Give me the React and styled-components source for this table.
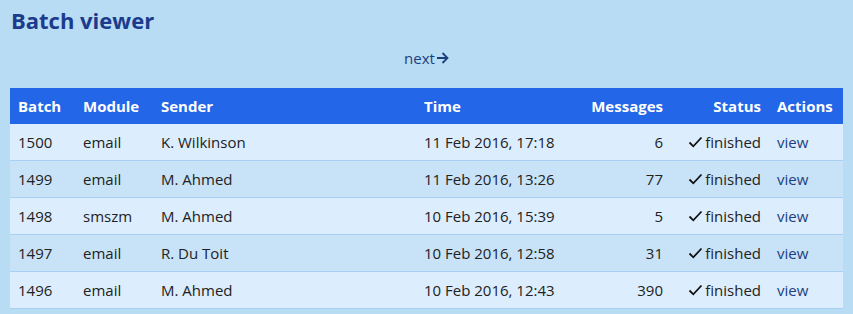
import React from "react";
import styled, { createGlobalStyle } from "styled-components";

const Global = createGlobalStyle`
  body {
    margin: 0;
    background: #b8dcf3;
    font-family: "Open Sans", "Noto Sans", sans-serif;
  }
`;

const Page = styled.div`
  padding: 6px 10px 5px;
`;

const Title = styled.h1`
  margin: 0 0 0 1px;
  font-size: 22px;
  font-weight: 700;
  color: #1c3b8c;
  line-height: 28px;
`;

const Pager = styled.div`
  text-align: center;
  margin: 14px 0 20px;
  font-size: 15px;
  line-height: 20px;
`;

const NextLink = styled.a`
  color: #1e3f7f;
  text-decoration: none;
  display: inline-flex;
  align-items: center;
  gap: 1px;
`;

const Table = styled.table`
  width: 100%;
  border-collapse: collapse;
  table-layout: fixed;
  font-size: 15px;
`;

const Th = styled.th`
  background: #2366e8;
  color: #fff;
  font-weight: 700;
  height: 36px;
  padding: 0 8px;
  text-align: ${p => p.$right ? "right" : "left"};
`;

const Row = styled.tr`
  background: ${p => p.$alt ? "#c8e3f8" : "#dcedfd"};
  border-bottom: 1px solid #a8d0f2;
`;

const Td = styled.td`
  height: 36px;
  padding: 0 8px;
  color: #222;
  text-align: ${p => p.$right ? "right" : "left"};
  white-space: nowrap;
`;

const Check = styled.span`
  margin-right: 2px;
`;

const View = styled.a`
  color: #1e3f7f;
  text-decoration: none;
`;

const rows = [
  [1500, "email", "K. Wilkinson", "11 Feb 2016, 17:18", 6],
  [1499, "email", "M. Ahmed", "11 Feb 2016, 13:26", 77],
  [1498, "smszm", "M. Ahmed", "10 Feb 2016, 15:39", 5],
  [1497, "email", "R. Du Toit", "10 Feb 2016, 12:58", 31],
  [1496, "email", "M. Ahmed", "10 Feb 2016, 12:43", 390],
];

function Arrow() {
  return (
    <svg width="13" height="12" viewBox="0 0 13 12" fill="none" stroke="#1e3f7f" strokeWidth="1.8">
      <path d="M1 6h10.5M6.5 1l5 5-5 5" />
    </svg>
  );
}

function Tick() {
  return (
    <svg width="15" height="12" viewBox="0 0 15 12" fill="none" stroke="#111" strokeWidth="1.8">
      <path d="M1.5 6.5l3.8 3.8L13.5 1.5" />
    </svg>
  );
}

export default function App() {
  return (
    <Page>
      <Global />
      <Title>Batch viewer</Title>
      <Pager>
        <NextLink href="#">next<Arrow /></NextLink>
      </Pager>
      <Table>
        <colgroup>
          <col style={{width: 65}} />
          <col style={{width: 78}} />
          <col style={{width: 263}} />
          <col style={{width: 161}} />
          <col style={{width: 94}} />
          <col style={{width: 98}} />
          <col style={{width: 74}} />
        </colgroup>
        <thead>
          <tr>
            <Th>Batch</Th>
            <Th>Module</Th>
            <Th>Sender</Th>
            <Th>Time</Th>
            <Th $right>Messages</Th>
            <Th $right>Status</Th>
            <Th>Actions</Th>
          </tr>
        </thead>
        <tbody>
          {rows.map((r, i) => (
            <Row key={r[0]} $alt={i % 2 === 1}>
              <Td>{r[0]}</Td>
              <Td>{r[1]}</Td>
              <Td>{r[2]}</Td>
              <Td>{r[3]}</Td>
              <Td $right>{r[4]}</Td>
              <Td $right><Check><Tick /></Check>finished</Td>
              <Td><View href="#">view</View></Td>
            </Row>
          ))}
        </tbody>
      </Table>
    </Page>
  );
}
